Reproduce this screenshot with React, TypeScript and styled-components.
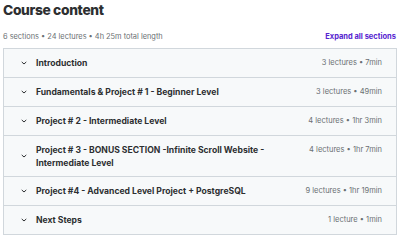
import styled, { createGlobalStyle } from "styled-components";

const GlobalStyle = createGlobalStyle`
  html, body {
    margin: 0;
    padding: 0;
    background: #ffffff;
  }
  body {
    font-family: Inter, "Noto Sans", sans-serif;
    color: #2d2f31;
  }
`;

interface Section {
  title: string;
  meta: string;
}

const sections: Section[] = [
  { title: "Introduction", meta: "3 lectures • 7min" },
  { title: "Fundamentals & Project # 1 - Beginner Level", meta: "3 lectures • 49min" },
  { title: "Project # 2 - Intermediate Level", meta: "4 lectures • 1hr 3min" },
  {
    title: "Project # 3 - BONUS SECTION -Infinite Scroll Website - Intermediate Level",
    meta: "4 lectures • 1hr 7min",
  },
  { title: "Project #4 - Advanced Level Project + PostgreSQL", meta: "9 lectures • 1hr 19min" },
  { title: "Next Steps", meta: "1 lecture • 1min" },
];

const Chevron = () => (
  <svg width="8" height="8" viewBox="0 0 8 8" fill="none">
    <path d="M2 3.2 L4 5 L6 3.2" stroke="#2d2f31" strokeWidth="1" strokeLinecap="round" strokeLinejoin="round" />
  </svg>
);

const App = () => {
  return (
    <Page>
      <GlobalStyle />
      <Title>Course content</Title>
      <SubHeader>
        <Summary>6 sections • 24 lectures • 4h 25m total length</Summary>
        <ExpandButton>Expand all sections</ExpandButton>
      </SubHeader>
      <SectionList>
        {sections.map((s) => (
          <SectionRow key={s.title}>
            <ChevronBox>
              <Chevron />
            </ChevronBox>
            <SectionTitle>{s.title}</SectionTitle>
            <SectionMeta>{s.meta}</SectionMeta>
          </SectionRow>
        ))}
      </SectionList>
    </Page>
  );
};

export default App;

const Page = styled.div`
  width: 400px;
  padding: 0 3px;
  box-sizing: border-box;
`;

const Title = styled.h2`
  margin: 0;
  padding-top: 1px;
  font-size: 13.8px;
  line-height: 18px;
  font-weight: 800;
  letter-spacing: -0.35px;
  color: #2d2f31;
`;

const SubHeader = styled.div`
  display: flex;
  align-items: center;
  justify-content: space-between;
  margin-top: 11px;
  height: 12px;
  margin-bottom: 6px;
`;

const Summary = styled.span`
  font-size: 7.4px;
  color: #6a6f73;
`;

const ExpandButton = styled.span`
  font-size: 7.5px;
  font-weight: 700;
  color: #5624d0;
  margin-right: 1px;
`;

const SectionList = styled.div`
  border: 1px solid #d1d7dc;
  border-bottom: none;
`;

const SectionRow = styled.div`
  display: flex;
  align-items: center;
  min-height: 29px;
  padding: 6px 14px 6px 16px;
  box-sizing: border-box;
  background: #f7f9fa;
  border-bottom: 1px solid #d1d7dc;
`;

const ChevronBox = styled.div`
  display: flex;
  width: 8px;
  margin-right: 8px;
  flex-shrink: 0;
`;

const SectionTitle = styled.div`
  flex: 1;
  font-size: 8.6px;
  line-height: 13px;
  font-weight: 700;
  color: #2d2f31;
  padding-right: 40px;
  align-self: flex-start;
  margin-top: 2px;
`;

const SectionMeta = styled.div`
  font-size: 7.5px;
  color: #6a6f73;
  white-space: nowrap;
  align-self: flex-start;
  margin-top: 3px;
`;
